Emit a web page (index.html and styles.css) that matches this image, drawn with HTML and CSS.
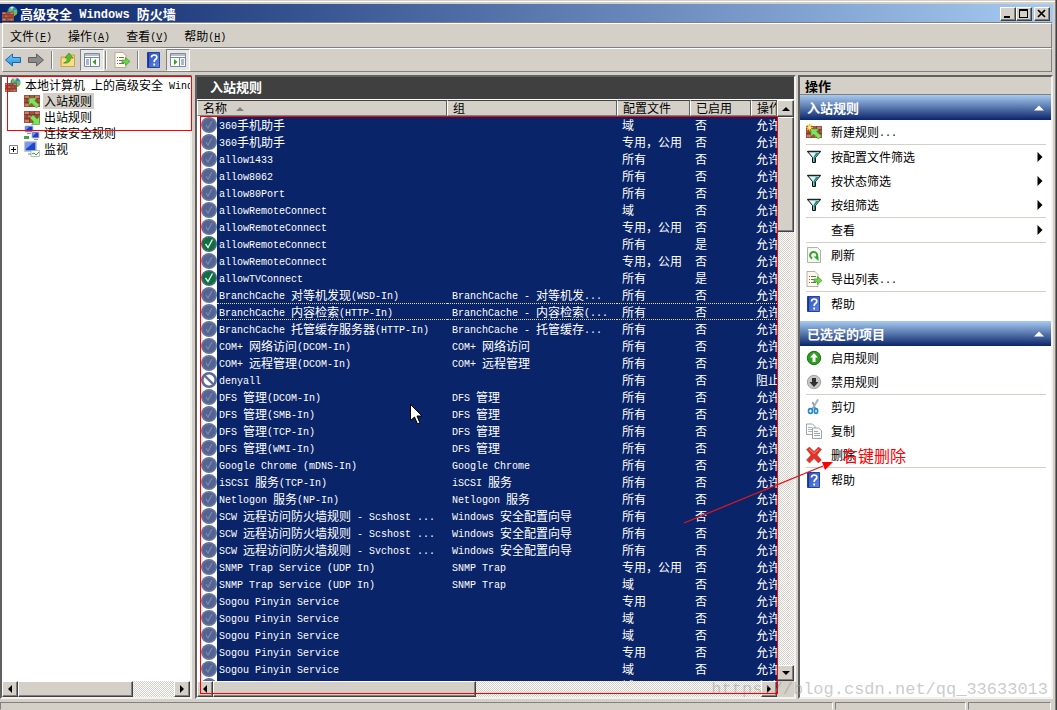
FILE: index.html
```html
<!DOCTYPE html>
<html lang="zh-CN">
<head>
<meta charset="utf-8">
<title>高级安全 Windows 防火墙</title>
<link rel="stylesheet" href="styles.css">
</head>
<body>
<svg class="defs" width="0" height="0" aria-hidden="true">
  <defs>
    <linearGradient id="gBlue" x1="0" y1="0" x2="0" y2="1"><stop offset="0" stop-color="#7fd0fb"/><stop offset="1" stop-color="#1b8be0"/></linearGradient>
    <linearGradient id="gHelp" x1="0" y1="0" x2="1" y2="1"><stop offset="0" stop-color="#2a4fc0"/><stop offset="1" stop-color="#5f86e2"/></linearGradient>
  </defs>
  <symbol id="bricks" viewBox="0 0 16 12">
    <rect width="16" height="12" fill="#a8523c"/>
    <path d="M1 1h4v2h-4zM11 1h4v2h-4zM4 5h4v1h-4zM1 9h4v2h-4zM9 9h5v2h-5z" fill="#c9806a"/>
    <path d="M0 3.500h16M0 7.500h16M5.500 0v3.500M10.500 0v3.500M3 3.500v4M8 3.500v4M13 3.500v4M5.500 7.500v4.500M10.500 7.500v4.500" stroke="#6b342a" stroke-width=".7" fill="none"/>
  </symbol>
  <symbol id="firewall" viewBox="0 0 16 16">
    <circle cx="10.500" cy="5.500" r="5" fill="#2f86d8"/>
    <path d="M7 2q3-2 4 0t-1 3l-3 1zM12 4l3 0v4l-3 2-1-3z" fill="#6cc04a"/>
    <path d="M8 1.500q2-1.500 4-.5l-2 2z" fill="#cfeaff"/>
    <svg x="0" y="6" width="12" height="9"><use href="#bricks"/></svg>
  </symbol>
  <symbol id="inbound" viewBox="0 0 16 16">
    <svg x="0" y="2" width="16" height="12"><use href="#bricks"/></svg>
    <path d="M5 5h8l-2.500 2.500 5 4.500-3 3-5-5-2.500 2.500z" fill="#7be35c" stroke="#3c9a2c" stroke-width=".6"/>
  </symbol>
  <symbol id="outbound" viewBox="0 0 16 16">
    <svg x="0" y="2" width="16" height="12"><use href="#bricks"/></svg>
    <path d="M15.500 15.500h-8l2.500-2.500-4-4 3-3 4 4 2.500-2.500z" fill="#7be35c" stroke="#3c9a2c" stroke-width=".6"/>
  </symbol>
  <symbol id="newrule" viewBox="0 0 16 16">
    <use href="#inbound"/>
    <path d="M3.500 0v7M0 3.500h7M1 1l5 5M6 1l-5 5" stroke="#f8b828" stroke-width="1.200"/><circle cx="3.500" cy="3.500" r="1.500" fill="#fff3a0"/>
  </symbol>
  <symbol id="secure" viewBox="0 0 16 16">
    <path d="M1 1h8v6h-8z" fill="#1d3fc0" stroke="#b8c4dc"/><path d="M8 7h7v6h-7z" fill="#1d3fc0" stroke="#b8c4dc"/>
    <path d="M3 8.500h4M10 14.500h4" stroke="#8a94a8"/><path d="M0 11h5v3h-5z" fill="#3ea83a"/><path d="M2 2l3 0-3 3zM9 8h3l-3 3z" fill="#6f93f5"/>
  </symbol>
  <symbol id="monitor" viewBox="0 0 16 16">
    <path d="M1 1h11v9h-11z" fill="#1d46c8" stroke="#aab6cc" stroke-width="1.500"/><path d="M2 2h7l-7 6z" fill="#7398f2"/>
    <path d="M4 12h6v2h-6z" fill="#b6becb"/><path d="M7 9.500h8.500v6h-8.500z" fill="#f8fff8" stroke="#9aa8a8" stroke-width=".7"/><path d="M8 13l2-1 2 2 3-3" stroke="#37a537" fill="none"/>
  </symbol>
  <symbol id="back" viewBox="0 0 16 16"><path d="M.5 8l7-6v3.500h8v5h-8v3.500z" fill="url(#gBlue)" stroke="#1469ad"/></symbol>
  <symbol id="forward" viewBox="0 0 16 16"><path d="M15.500 8l-7-6v3.500h-8v5h8v3.500z" fill="#8a8a8a" stroke="#5f5f5f"/></symbol>
  <symbol id="folderup" viewBox="0 0 16 16">
    <path d="M1 5h5l1-2h7.500v11.500h-13.500z" fill="#f3cf66" stroke="#c3962e" stroke-width=".8"/><path d="M2 7h12v7h-12z" fill="#f9de8a"/>
    <path d="M3.500 11q4-1 4-5h-2.500l4-5 4 5h-2.500q0 6-7 5z" fill="#56bd2d" stroke="#2f8518" stroke-width=".6"/>
  </symbol>
  <symbol id="treepane" viewBox="0 0 18 16">
    <path d="M1.500 1.500h15v13h-15z" fill="#fff" stroke="#7a8898"/><path d="M2 2h14v2h-14z" fill="#b4c0d0"/><path d="M2 5.500h14M7.500 6v8" stroke="#7a8898"/>
    <path d="M3 8h3M3 10h3M3 12h3" stroke="#4a6fb8"/><path d="M13 7v6l-3.500-3z" fill="#2f9f25"/>
  </symbol>
  <symbol id="actionpane" viewBox="0 0 18 16">
    <path d="M1.500 1.500h15v13h-15z" fill="#fff" stroke="#7a8898"/><path d="M2 2h14v2h-14z" fill="#b4c0d0"/><path d="M2 5.500h14M10.500 6v8" stroke="#7a8898"/>
    <path d="M12 8h3M12 10h3M12 12h3" stroke="#4a6fb8"/><path d="M5 7v6l3.500-3z" fill="#2f9f25"/>
  </symbol>
  <symbol id="export" viewBox="0 0 16 16">
    <path d="M1 .5h8l3 3v12h-11z" fill="#fffbe8" stroke="#a39e88" stroke-width=".8"/><path d="M3 5.500h1M5 5.500h5M3 8.500h1M5 8.500h4M3 11.500h1M5 11.500h5" stroke="#6f6a8a"/>
    <path d="M8 8h3.500v-2.500l4.500 4-4.500 4v-2.500h-3.500z" fill="#6dd44a" stroke="#3c9a28" stroke-width=".7"/>
  </symbol>
  <symbol id="help" viewBox="0 0 16 16">
    <path d="M1.500 .5h12v15h-12z" fill="url(#gHelp)" stroke="#2440a0"/><path d="M2.500 1v14" stroke="#1b328c"/>
    <path d="M5.500 5.500q0-2.500 2.700-2.500t2.600 2.300q0 1.500-1.400 2.200t-1.200 2.500M8.200 11.500v2" stroke="#fff" stroke-width="1.700" fill="none"/>
  </symbol>
  <symbol id="filter" viewBox="0 0 16 16">
    <path d="M1.500 2.500h13l-5 6v5h-3v-5z" fill="#d8f4f4" stroke="#111"/><path d="M10 4h3l-4 4v5h-1.500v-5z" fill="#178f8f"/><path d="M1.500 2.500h13" stroke="#222" stroke-width="1.500"/>
  </symbol>
  <symbol id="refresh" viewBox="0 0 16 16">
    <path d="M1.500 .5h10l3 3v12h-13z" fill="#f4f8f0" stroke="#9a9f98" stroke-width=".8"/>
    <path d="M6 11.500a3.500 3.500 0 1 1 4.500-1" fill="none" stroke="#35a433" stroke-width="2"/><path d="M7.500 9.500h5v4.500z" fill="#35a433"/>
  </symbol>
  <symbol id="enable" viewBox="0 0 16 16"><circle cx="8" cy="8" r="6.700" fill="#2d9c20" stroke="#1d7314"/><path d="M8 3l4 4.500h-2.500v4.500h-3v-4.500h-2.500z" fill="#fff"/></symbol>
  <symbol id="disable" viewBox="0 0 16 16"><circle cx="8" cy="8" r="6.700" fill="#c6c6c6" stroke="#a3a3a3"/><path d="M8 13l4.500-5h-2.500v-4h-4v4h-2.500z" fill="#303030"/></symbol>
  <symbol id="cut" viewBox="0 0 16 16">
    <path d="M12 .5l-6 10M6.500 3l3 7" stroke="#8296a6" stroke-width="1.700"/><path d="M12 .5l-5 8" stroke="#d4e0e8" stroke-width=".6"/>
    <ellipse cx="4.500" cy="12" rx="2" ry="2.400" fill="none" stroke="#2488cf" stroke-width="1.700"/><ellipse cx="10" cy="12" rx="1.600" ry="2.400" fill="none" stroke="#2488cf" stroke-width="1.700"/>
  </symbol>
  <symbol id="copy" viewBox="0 0 16 16">
    <path d="M.5 1h6l2.500 2.500v8h-8.500z" fill="#fff" stroke="#8b8b8b" stroke-width=".8"/><path d="M2 4.500h4M2 6.500h4M2 8.500h4" stroke="#8aa0c0" stroke-width=".8"/>
    <path d="M6.500 5h6l3 2.500v8h-9z" fill="#fff" stroke="#8b8b8b" stroke-width=".8"/><path d="M8 8.500h4M8 10.500h6M8 12.500h6" stroke="#6f8fc8" stroke-width=".8"/>
  </symbol>
  <symbol id="delete" viewBox="0 0 16 16"><path d="M.5 2.500l3-2.500 4.500 4.500 4.500-4.500 3 2.500-4.500 5.500 4.500 5-3 3-4.500-4.500-4.500 4.500-3-3 4.500-5z" fill="#e2332b" stroke="#c0302a" stroke-width=".5"/><path d="M3 2l5 4.500 4.500-4" stroke="#f58b80" fill="none"/></symbol>
  <symbol id="off" viewBox="0 0 16 16"><circle cx="8" cy="8" r="8" fill="#66749c"/><circle cx="8" cy="8" r="6.300" fill="#536392"/><path d="M5 8l2 3 4-7" stroke="#7c8aae" stroke-width="1.200" fill="none"/></symbol>
  <symbol id="on" viewBox="0 0 16 16"><circle cx="8" cy="8" r="8" fill="#4d6a80"/><circle cx="8" cy="8" r="6.500" fill="#0c7040"/><path d="M4.500 8l2.500 3.500 4.500-8" stroke="#e8f0ea" stroke-width="1.400" fill="none"/></symbol>
  <symbol id="block" viewBox="0 0 16 16"><circle cx="8" cy="8" r="6.700" fill="#fff" stroke="#5c6b98" stroke-width="2.600"/><path d="M3.500 3.500l9 9" stroke="#5c6b98" stroke-width="2.400"/></symbol>
  <symbol id="left" viewBox="0 0 8 8"><path d="M6 0v8l-4-4z"/></symbol>
  <symbol id="right" viewBox="0 0 8 8"><path d="M2 0v8l4-4z"/></symbol>
  <symbol id="up" viewBox="0 0 8 8"><path d="M0 6h8l-4-4z"/></symbol>
  <symbol id="down" viewBox="0 0 8 8"><path d="M0 2h8l-4 4z"/></symbol>
</svg>

<div class="window">
  <header class="titlebar">
    <svg class="icon"><use href="#firewall"/></svg>
    <h1>高级安全<span class="en"> Windows </span>防火墙</h1>
    <div class="winbuttons">
      <button class="bevel" aria-label="最小化"><svg viewBox="0 0 12 10"><path d="M2 7h6v2h-6z"/></svg></button>
      <button class="bevel" aria-label="最大化"><svg viewBox="0 0 12 10"><path d="M1 0h9v9h-9zM2 2v6h7v-6z" fill-rule="evenodd"/></svg></button>
      <button class="bevel close" aria-label="关闭"><svg viewBox="0 0 12 10"><path d="M2 1l7 7M9 1l-7 7" stroke="#000" stroke-width="1.700"/></svg></button>
    </div>
  </header>

  <nav class="menubar">
    <button>文件<span class="en">(<u>F</u>)</span></button>
    <button>操作<span class="en">(<u>A</u>)</span></button>
    <button>查看<span class="en">(<u>V</u>)</span></button>
    <button>帮助<span class="en">(<u>H</u>)</span></button>
  </nav>

  <div class="toolbar">
    <button aria-label="后退"><svg class="icon"><use href="#back"/></svg></button>
    <button aria-label="前进"><svg class="icon"><use href="#forward"/></svg></button>
    <i class="divider"></i>
    <button aria-label="上一级"><svg class="icon"><use href="#folderup"/></svg></button>
    <button class="pressed" aria-label="显示控制台树"><svg class="icon"><use href="#treepane"/></svg></button>
    <i class="divider"></i>
    <button aria-label="导出列表"><svg class="icon"><use href="#export"/></svg></button>
    <i class="divider"></i>
    <button aria-label="帮助"><svg class="icon"><use href="#help"/></svg></button>
    <button class="pressed" aria-label="显示操作窗格"><svg class="icon"><use href="#actionpane"/></svg></button>
  </div>

  <main class="panes">
    <section class="pane tree">
      <ul>
        <li class="root"><svg class="icon"><use href="#firewall"/></svg><span>本地计算机<span class="en"> </span>上的高级安全<span class="en"> Windows</span></span></li>
        <li><svg class="icon"><use href="#inbound"/></svg><span class="selected">入站规则</span></li>
        <li><svg class="icon"><use href="#outbound"/></svg><span>出站规则</span></li>
        <li><svg class="icon"><use href="#secure"/></svg><span>连接安全规则</span></li>
        <li class="parent"><button class="expand" aria-label="展开"><svg viewBox="0 0 9 9"><path d="M.5 .5h8v8h-8z" fill="#fff" stroke="#808080"/><path d="M2 4.500h5M4.500 2v5" stroke="#000"/></svg></button><svg class="icon"><use href="#monitor"/></svg><span>监视</span></li>
      </ul>
      <div class="hscroll">
        <button class="bevel" aria-label="向左"><svg><use href="#left"/></svg></button>
        <div class="track"><div class="bevel thumb tree-thumb"></div></div>
        <button class="bevel" aria-label="向右"><svg><use href="#right"/></svg></button>
      </div>
      <div class="mark tree-mark"></div>
    </section>

    <section class="pane rules">
      <h2>入站规则</h2>
      <div class="listview">
        <div class="rows">
          <table>
            <colgroup><col class="c-icon"><col class="c-name"><col class="c-group"><col class="c-profile"><col class="c-enabled"><col></colgroup>
            <thead><tr><th colspan="2">名称<svg class="sort"><use href="#up"/></svg></th><th>组</th><th>配置文件</th><th>已启用</th><th>操作</th></tr></thead>
            <tbody id="rules"></tbody>
          </table>
        </div>
        <div class="vscroll">
          <button class="bevel" aria-label="向上"><svg><use href="#up"/></svg></button>
          <div class="track"><div class="bevel thumb rules-vthumb"></div></div>
          <button class="bevel" aria-label="向下"><svg><use href="#down"/></svg></button>
        </div>
        <div class="hscroll">
          <button class="bevel" aria-label="向左"><svg><use href="#left"/></svg></button>
          <div class="track"><div class="bevel thumb rules-hthumb"></div></div>
          <button class="bevel" aria-label="向右"><svg><use href="#right"/></svg></button>
        </div>
        <div class="corner"></div>
      </div>
      <div class="mark rules-mark"></div>
    </section>

    <aside class="pane actions">
      <h2>操作</h2>
      <h3>入站规则<svg><use href="#up"/></svg></h3>
      <div class="group"><button><svg class="icon"><use href="#newrule"/></svg><span>新建规则<span class="en">...</span></span></button></div>
      <div class="group">
        <button><svg class="icon"><use href="#filter"/></svg><span>按配置文件筛选</span><svg class="more"><use href="#right"/></svg></button>
        <button><svg class="icon"><use href="#filter"/></svg><span>按状态筛选</span><svg class="more"><use href="#right"/></svg></button>
        <button><svg class="icon"><use href="#filter"/></svg><span>按组筛选</span><svg class="more"><use href="#right"/></svg></button>
      </div>
      <div class="group"><button><i class="icon"></i><span>查看</span><svg class="more"><use href="#right"/></svg></button></div>
      <div class="group">
        <button><svg class="icon"><use href="#refresh"/></svg><span>刷新</span></button>
        <button><svg class="icon"><use href="#export"/></svg><span>导出列表<span class="en">...</span></span></button>
      </div>
      <div class="group last"><button><svg class="icon"><use href="#help"/></svg><span>帮助</span></button></div>
      <h3>已选定的项目<svg><use href="#up"/></svg></h3>
      <div class="group">
        <button><svg class="icon"><use href="#enable"/></svg><span>启用规则</span></button>
        <button><svg class="icon"><use href="#disable"/></svg><span>禁用规则</span></button>
      </div>
      <div class="group">
        <button><svg class="icon"><use href="#cut"/></svg><span>剪切</span></button>
        <button><svg class="icon"><use href="#copy"/></svg><span>复制</span></button>
        <button><svg class="icon"><use href="#delete"/></svg><span>删除</span></button>
      </div>
      <div class="group last"><button><svg class="icon"><use href="#help"/></svg><span>帮助</span></button></div>
      <svg class="arrow" viewBox="0 0 152 66"><path d="M1 64L140 7" stroke="#e8141c" stroke-width="1.200"/><path d="M150 3l-11 0 3 8z" fill="#f00"/></svg>
      <div class="note">右键删除</div>
    </aside>
  </main>

  <footer class="statusbar"><span></span><span class="mid"></span><span class="end"></span></footer>
</div>
<svg class="cursor" viewBox="0 0 12 21"><path d="M.5 .5v16l4-3.500 3 7 2.500-1-3-7h5z" fill="#fff" stroke="#000"/></svg>
<div class="watermark">https://blog.csdn.net/qq_33633013</div>
<script src="app.js"></script>
</body>
</html>
```
FILE: styles.css
```css
* { box-sizing: border-box; }
body {
  margin: 0;
  height: 100vh;
  overflow: hidden;
  font: 12px/16px "Noto Sans CJK SC", sans-serif;
  color: #000;
  background: #d4d0c8;
}
.defs { position: absolute; }
button {
  margin: 0;
  padding: 0;
  border: 0;
  background: none;
  font: inherit;
  color: inherit;
  text-align: left;
}
h1, h2, h3, ul { margin: 0; padding: 0; }
.en {
  font-family: "Liberation Mono", monospace;
  font-size: 10px;
  line-height: 8px;
  vertical-align: 1px;
  white-space: pre;
}
.icon { width: 16px; height: 16px; flex: none; display: block; }
.bevel {
  background: #d4d0c8;
  border: 1px solid;
  border-color: #fff #404040 #404040 #fff;
  box-shadow: inset -1px -1px #808080;
}

.window {
  display: flex;
  flex-direction: column;
  height: 100%;
  border-right: 1px solid #404040;
  box-shadow: inset -1px 0 #808080, inset 0 1px #d4d0c8, inset 0 2px #fff;
  padding: 4px 3px 0 0;
}
.titlebar {
  display: flex;
  align-items: center;
  height: 19px;
  padding: 0 3px 0 2px;
  gap: 2px;
  background: linear-gradient(to right, #0a246a, #a6caf0);
  color: #fff;
}
.titlebar h1 { flex: 1; font-size: 13px; font-weight: bold; line-height: 18px; }
.titlebar .en { font-size: 12px; }
.winbuttons { display: flex; }
.winbuttons button { width: 16px; height: 14px; display: flex; }
.winbuttons svg { width: 12px; height: 10px; margin: 1px; }
.winbuttons .close { margin-left: 2px; }

.menubar, .toolbar {
  display: flex;
  align-items: center;
  margin: 0 1px 0 2px;
  border: 1px solid;
  border-color: #fff #808080 #808080 #fff;
}
.menubar { height: 25px; gap: 16px; padding-left: 7px; box-shadow: 0 -1px #808080; }
.toolbar { height: 24px; padding-left: 2px; gap: 7px; }
.toolbar .divider { width: 2px; height: 18px; background: #808080; border-right: 1px solid #fff; }
.toolbar .pressed {
  margin: 0 -6px 0 -3px;
  padding: 2px;
  border: 1px solid;
  border-color: #808080 #fff #fff #808080;
  background: #e9e7e3;
}
.toolbar .pressed .icon { width: 18px; }

.panes { flex: 1; min-height: 0; display: flex; padding-top: 3px; }
.pane {
  position: relative;
  display: flex;
  flex-direction: column;
  min-width: 0;
  border: 2px solid;
  border-color: #606060 #f4f2ee #f4f2ee #606060;
  background: #fff;
}
.tree { width: 192px; flex: none; margin-right: 3px; }
.tree ul { flex: 1; list-style: none; overflow: hidden; }
.tree li { display: flex; align-items: center; gap: 4px; height: 16px; padding-left: 22px; white-space: nowrap; }
.tree .root { padding-left: 3px; }
.tree .parent { padding-left: 7px; }
.expand { width: 9px; height: 9px; margin-right: 2px; }
.expand svg { display: block; width: 9px; height: 9px; }
.selected { background: #d4d0c8; padding: 0 2px 0 1px; margin-left: -1px; }

.hscroll, .vscroll { display: flex; }
.hscroll { height: 16px; }
.vscroll { flex-direction: column; }
.hscroll button, .vscroll button { width: 16px; height: 16px; display: flex; align-items: center; justify-content: center; flex: none; }
.hscroll button svg, .vscroll button svg, .sort { width: 8px; height: 8px; }
.track {
  flex: 1;
  background: repeating-conic-gradient(#fff 0 25%, #d4d0c8 0 50%) 0 0 / 2px 2px;
}
.hscroll .thumb { height: 100%; }
.tree-thumb { width: 74%; }
.rules-hthumb { width: 48%; }
.rules-vthumb { height: 21%; }

.rules { flex: 1; }
.rules h2 {
  height: 23px;
  padding-left: 13px;
  background: #404040;
  border-bottom: 1px solid #fff;
  color: #fff;
  font-size: 13px;
  line-height: 20px;
}
.listview { flex: 1; min-height: 0; display: grid; grid-template: 1fr 16px / 1fr 17px; }
.rows { overflow: hidden; min-width: 0; min-height: 0; }
.vscroll button, .vscroll .thumb { width: 17px; }
.vscroll button:first-child { height: 17px; }
.corner { background: #d4d0c8; }
table { width: 100%; table-layout: fixed; border-collapse: separate; border-spacing: 0; }
.c-icon { width: 20px; }
.c-name { width: 230px; }
.c-group { width: 170px; }
.c-profile { width: 73px; }
.c-enabled { width: 61px; }
th, td { padding: 0; white-space: nowrap; overflow: hidden; text-align: left; font-weight: normal; }
th {
  height: 16px;
  line-height: 14px;
  padding-left: 5px;
  background: #d4d0c8;
  border: 1px solid;
  border-color: #404040 #606060 #808080 #fff;
}
.sort { margin-left: 9px; fill: #808080; }
td { height: 17px; line-height: 17px; padding-left: 5px; background: #0a246a; color: #fff; vertical-align: middle; }
td:first-child { padding-left: 4px; background: #fff; }
td:nth-child(2) { padding-left: 2px; }
.focus td + td { line-height: 15px; border: 1px dotted #e8d890; border-width: 1px 0; }

.actions { width: 255px; flex: none; margin-left: 2px; }
.actions h2 {
  height: 18px;
  padding-left: 5px;
  background: #d4d0c8;
  border-bottom: 1px solid #808080;
  font-size: 13px;
  line-height: 17px;
}
.actions h3 {
  display: flex;
  align-items: center;
  justify-content: space-between;
  height: 25px;
  padding: 0 7px 0 7px;
  background: linear-gradient(#a6caf0, #0a246a);
  color: #fff;
  font-size: 13px;
}
.actions h3 svg { width: 10px; height: 10px; fill: #fff; }
.group { margin: 0 5px 0 6px; border-bottom: 1px solid #d4d0c8; }
.group.last { border: 0; margin-bottom: 5px; }
.group button { display: flex; align-items: center; width: 100%; height: 24px; gap: 9px; }
.group button > span { flex: 1; }
.more { width: 10px; height: 10px; margin-right: 1px; }

.mark {
  position: absolute;
  z-index: 2;
  outline: 1px solid #f00;
  outline-offset: -1px;
  pointer-events: none;
}
.tree-mark { left: 5px; top: -1px; right: -2px; height: 55px; }
.rules-mark { left: 3px; top: 39px; right: 16px; bottom: 3px; }
.arrow { position: absolute; left: -117px; top: 382px; width: 152px; height: 66px; fill: none; pointer-events: none; }
.note { position: absolute; left: 42px; top: 366px; font-size: 16px; line-height: 24px; color: #f00; }
.cursor { position: absolute; left: 410px; top: 404px; width: 12px; height: 21px; }
.watermark {
  position: absolute;
  right: 9px;
  bottom: 9px;
  font: 17px/22px "Liberation Mono", monospace;
  color: rgba(150, 150, 150, .5);
}

.statusbar { display: flex; gap: 2px; height: 11px; padding: 3px 2px 0 0; }
.statusbar span { flex: 1; border: 1px solid; border-color: #808080 #fff transparent #808080; }
.statusbar .mid { flex: 0 0 131px; }
.statusbar .end { flex: 0 0 83px; }
```
FILE: app.js
```js
// name | group | profile | enabled | action | icon
const rules = [
  "360手机助手||域", "360手机助手||专用，公用", "allow1433||所有", "allow8062||所有", "allow80Port||所有",
  "allowRemoteConnect||域", "allowRemoteConnect||专用，公用", "allowRemoteConnect||所有|是||on",
  "allowRemoteConnect||专用，公用", "allowTVConnect||所有|是||on",
  "BranchCache 对等机发现(WSD-In)|BranchCache - 对等机发...|所有",
  "BranchCache 内容检索(HTTP-In)|BranchCache - 内容检索(...|所有",
  "BranchCache 托管缓存服务器(HTTP-In)|BranchCache - 托管缓存...|所有",
  "COM+ 网络访问(DCOM-In)|COM+ 网络访问|所有", "COM+ 远程管理(DCOM-In)|COM+ 远程管理|所有",
  "denyall||所有|否|阻止|block",
  "DFS 管理(DCOM-In)|DFS 管理|所有", "DFS 管理(SMB-In)|DFS 管理|所有",
  "DFS 管理(TCP-In)|DFS 管理|所有", "DFS 管理(WMI-In)|DFS 管理|所有",
  "Google Chrome (mDNS-In)|Google Chrome|所有", "iSCSI 服务(TCP-In)|iSCSI 服务|所有",
  "Netlogon 服务(NP-In)|Netlogon 服务|所有",
  "SCW 远程访问防火墙规则 - Scshost ...|Windows 安全配置向导|所有",
  "SCW 远程访问防火墙规则 - Scshost ...|Windows 安全配置向导|所有",
  "SCW 远程访问防火墙规则 - Svchost ...|Windows 安全配置向导|所有",
  "SNMP Trap Service (UDP In)|SNMP Trap|专用，公用", "SNMP Trap Service (UDP In)|SNMP Trap|域",
  "Sogou Pinyin Service||专用", "Sogou Pinyin Service||域", "Sogou Pinyin Service||域",
  "Sogou Pinyin Service||专用", "Sogou Pinyin Service||域", "Sogou Pinyin Service||域"
];
const FOCUSED = 11;

// Latin runs are set in the narrow monospaced face
const mixed = text => text.replace(/[\x20-\x7e]+/g, run => `<span class="en">${run}</span>`);

document.getElementById("rules").innerHTML = rules.map((line, i) => {
  const [name, group, profile, enabled, action, icon] = line.split("|");
  const cells = [name, group, profile, enabled || "否", action || "允许"];
  return `<tr${i === FOCUSED ? ' class="focus"' : ""}><td><svg class="icon"><use href="#${icon || "off"}"/></svg></td>` +
    cells.map(c => `<td>${mixed(c)}</td>`).join("") + "</tr>";
}).join("");
```
